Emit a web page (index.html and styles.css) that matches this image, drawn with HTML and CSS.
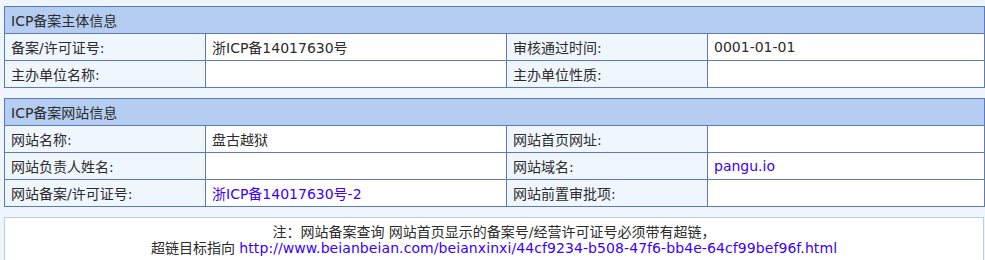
FILE: index.html
```html
<!DOCTYPE html>
<html lang="zh-CN">
<head>
<meta charset="utf-8">
<title>ICP备案信息</title>
<link rel="stylesheet" href="styles.css">
</head>
<body>
<div class="page">
  <table class="info">
    <colgroup><col class="c1"><col class="c2"><col class="c3"><col class="c4"></colgroup>
    <tr><th colspan="4">ICP备案主体信息</th></tr>
    <tr><td class="lbl">备案/许可证号:</td><td>浙ICP备14017630号</td><td class="lbl">审核通过时间:</td><td>0001-01-01</td></tr>
    <tr><td class="lbl">主办单位名称:</td><td></td><td class="lbl">主办单位性质:</td><td></td></tr>
  </table>
  <table class="info">
    <colgroup><col class="c1"><col class="c2"><col class="c3"><col class="c4"></colgroup>
    <tr><th colspan="4">ICP备案网站信息</th></tr>
    <tr><td class="lbl">网站名称:</td><td>盘古越狱</td><td class="lbl">网站首页网址:</td><td></td></tr>
    <tr><td class="lbl">网站负责人姓名:</td><td></td><td class="lbl">网站域名:</td><td><a class="link" href="#">pangu.io</a></td></tr>
    <tr><td class="lbl">网站备案/许可证号:</td><td><a class="link" href="#">浙ICP备14017630号-2</a></td><td class="lbl">网站前置审批项:</td><td></td></tr>
  </table>
  <div class="note">
    注：网站备案查询 网站首页显示的备案号/经营许可证号必须带有超链，<br>
    超链目标指向 <a class="link url" href="#">http://www.beianbeian.com/beianxinxi/44cf9234-b508-47f6-bb4e-64cf99bef96f.html</a>
  </div>
</div>
</body>
</html>
```
FILE: styles.css
```css
html, body {
  margin: 0;
  padding: 0;
  background: #eef5fd;
}
body {
  font-family: "DejaVu Sans", Verdana, "Noto Sans CJK SC", sans-serif;
  font-size: 14px;
  color: #2b2b2b;
}
.page {
  padding: 6px 0 0 4px;
  width: 980px;
}
.info {
  width: 980px;
  border-collapse: collapse;
  table-layout: fixed;
  margin-bottom: 10px;
  background: #fff;
}
.c1 { width: 201px; }
.c2 { width: 301px; }
.c3 { width: 201px; }
.c4 { width: 277px; }
.info th, .info td {
  border: 1px solid #5a7bb5;
  height: 27px;
  padding: 0 6px;
  text-align: left;
  font-weight: normal;
  vertical-align: middle;
  white-space: nowrap;
  box-sizing: border-box;
}
.info th {
  background: #b4cdf0;
}
.info td.lbl {
  background: #f0f6fe;
}
.link {
  color: #3a00ff;
  text-decoration: none;
}
.url {
  letter-spacing: 0.08px;
}
.note {
  border: 1px solid #b2d3e6;
  background: #fff;
  text-align: center;
  line-height: 16px;
  padding: 6px 0 10px;
}
```
